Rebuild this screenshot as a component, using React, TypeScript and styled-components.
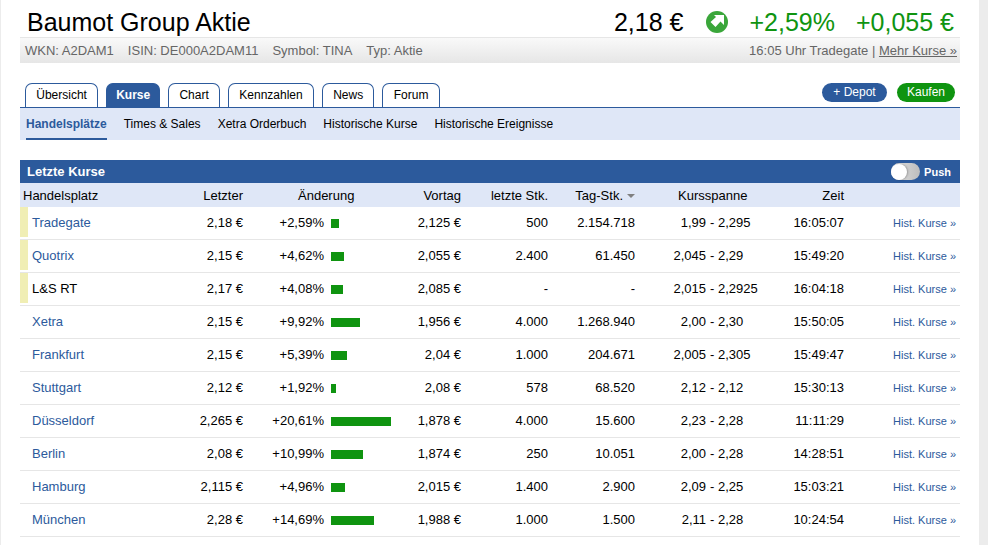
import styled, { createGlobalStyle } from 'styled-components';

const GlobalStyle = createGlobalStyle`
    html, body {
        margin: 0;
        padding: 0;
        background: #fff;
    }
    body {
        font-family: "Liberation Sans", Arial, sans-serif;
        color: #000;
        overflow: hidden;
    }
`;

const Page = styled.div`
    width: 988px;
    height: 545px;
    overflow: hidden;
    display: grid;
    grid-template-columns: 1px 19px 940px 19px 9px;
`;

const Edge = styled.div`
    background: #ececec;
`;

const Content = styled.div`
    grid-column: 3;
    display: flex;
    flex-direction: column;
`;

const TitleRow = styled.div`
    height: 38px;
    box-sizing: border-box;
    display: flex;
    align-items: center;
    padding: 8px 6px 0 7px;
    border-bottom: 1px solid #e6e6e6;
`;

const Title = styled.h1`
    margin: 0;
    flex: 1;
    font-size: 25px;
    font-weight: 400;
`;

const Price = styled.span`
    font-size: 25px;
`;

const ChangeText = styled.span`
    font-size: 25px;
    color: #0f9410;
    margin-left: 21px;
`;

const TrendIcon = styled.svg`
    width: 22px;
    height: 22px;
    margin: -2px 0 0 23px;
`;

const InfoBar = styled.div`
    height: 25px;
    display: flex;
    align-items: center;
    justify-content: space-between;
    padding: 0 3px 0 5px;
    font-size: 13px;
    color: #666;
    background: linear-gradient(#f9f9f9, #e6e6e6);
`;

const InfoList = styled.div`
    display: flex;
    gap: 14px;
`;

const MoreLink = styled.a`
    color: #666;
    text-decoration: underline;
`;

const TabRow = styled.div`
    margin-top: 20px;
    height: 24px;
    display: flex;
    align-items: flex-start;
    padding: 0 5px;
    gap: 8px;
    border-bottom: 1px solid #2c5a9c;
`;

const Tab = styled.div<{ $active?: boolean }>`
    height: 24px;
    box-sizing: border-box;
    padding: 0 ${({ $active }) => ($active ? 9 : 10.25)}px 2px;
    display: flex;
    align-items: center;
    font-size: 12px;
    font-weight: ${({ $active }) => ($active ? 700 : 400)};
    color: ${({ $active }) => ($active ? '#fff' : '#000')};
    background: ${({ $active }) => ($active ? '#2c5a9c' : '#fff')};
    border: 1px solid #2c5a9c;
    border-bottom: none;
    border-radius: 7px 7px 0 0;
`;

const Actions = styled.div`
    margin-left: auto;
    display: flex;
    gap: 10px;
    padding-bottom: 5px;
`;

const Pill = styled.div<{ $color: string; $width: number }>`
    width: ${({ $width }) => $width}px;
    height: 19px;
    padding-bottom: 1px;
    box-sizing: border-box;
    border-radius: 10px;
    background: ${({ $color }) => $color};
    color: #fff;
    font-size: 12px;
    display: flex;
    align-items: center;
    justify-content: center;
`;

const SubNav = styled.div`
    height: 32px;
    display: flex;
    gap: 17px;
    padding-left: 6px;
    background: #dfe7f7;
    font-size: 12px;
`;

const SubItem = styled.div<{ $active?: boolean }>`
    display: flex;
    align-items: center;
    color: ${({ $active }) => ($active ? '#2c5a9c' : '#000')};
    font-weight: ${({ $active }) => ($active ? 700 : 400)};
    border-bottom: 2px solid ${({ $active }) => ($active ? '#2c5a9c' : 'transparent')};
    padding-top: 2px;
    box-sizing: border-box;
`;

const TableHead = styled.div`
    margin-top: 20px;
    height: 23px;
    display: flex;
    align-items: center;
    justify-content: space-between;
    padding: 0 9px 0 7px;
    background: #2c5a9c;
    color: #fff;
    font-size: 13px;
    font-weight: 700;
`;

const PushBox = styled.div`
    display: flex;
    align-items: center;
    gap: 4px;
    font-size: 11px;
`;

const Toggle = styled.div`
    width: 29px;
    height: 17px;
    border-radius: 9px;
    background: linear-gradient(90deg, #e4e4e4, #bdbdbd);
    display: flex;
    align-items: center;
`;

const Knob = styled.div`
    width: 16px;
    height: 16px;
    border-radius: 50%;
    background: #fff;
    box-shadow: 1px 0 2px rgba(0, 0, 0, 0.25);
`;

const columns = '8px 170px 45px 157px 61px 87px 87px 125px 84px 112px 4px';

const HeaderRow = styled.div`
    height: 24px;
    display: grid;
    grid-template-columns: ${columns};
    align-items: center;
    background: #dfe7f7;
    font-size: 13px;
`;

const Row = styled.div`
    height: 33px;
    box-sizing: border-box;
    padding-bottom: 2px;
    display: grid;
    grid-template-columns: ${columns};
    align-items: center;
    border-bottom: 1px solid #e6e6e6;
    font-size: 13px;
`;

const Marker = styled.div<{ $on: boolean }>`
    height: 30px;
    background: ${({ $on }) => ($on ? '#f0eeb4' : 'transparent')};
`;

const VenueCell = styled.div<{ $linked: boolean }>`
    padding-left: 4px;
    color: ${({ $linked }) => ($linked ? '#2c5a9c' : '#000')};
`;

const HeadFirst = styled.div`
    grid-column: 1 / span 2;
    padding-left: 3px;
`;

const Num = styled.div`
    text-align: right;
    white-space: nowrap;
`;

const ChangeHead = styled.div`
    padding-left: 55px;
`;

const ChangeCell = styled.div`
    display: grid;
    grid-template-columns: 81px 1fr;
    gap: 7px;
    align-items: center;
    text-align: right;
`;

const Bar = styled.div`
    height: 9px;
    margin-top: 3px;
    background: #0f9410;
`;

const SortArrow = styled.span`
    display: inline-block;
    margin-left: 4px;
    vertical-align: middle;
    border-left: 4px solid transparent;
    border-right: 4px solid transparent;
    border-top: 4px solid #808080;
`;

const RangeHead = styled.div`
    padding-left: 43px;
`;

const RangeCell = styled.div`
    display: grid;
    grid-template-columns: 71px auto;
    column-gap: 4px;
    white-space: nowrap;
`;

const RangeLow = styled.span`
    text-align: right;
`;

const HistLink = styled.div`
    text-align: right;
    font-size: 11px;
    white-space: nowrap;
    margin-top: 2px;
    color: #2c5a9c;
`;

type Quote = {
    readonly venue: string;
    readonly marked?: boolean;
    readonly plain?: boolean;
    readonly last: string;
    readonly change: string;
    readonly bar: number;
    readonly prev: string;
    readonly lastQty: string;
    readonly dayQty: string;
    readonly low: string;
    readonly high: string;
    readonly time: string;
};

const quotes: Quote[] = [
    { venue: 'Tradegate', marked: true, last: '2,18 €', change: '+2,59%', bar: 8, prev: '2,125 €', lastQty: '500', dayQty: '2.154.718', low: '1,99', high: '2,295', time: '16:05:07' },
    { venue: 'Quotrix', marked: true, last: '2,15 €', change: '+4,62%', bar: 13, prev: '2,055 €', lastQty: '2.400', dayQty: '61.450', low: '2,045', high: '2,29', time: '15:49:20' },
    { venue: 'L&S RT', marked: true, plain: true, last: '2,17 €', change: '+4,08%', bar: 12, prev: '2,085 €', lastQty: '-', dayQty: '-', low: '2,015', high: '2,2925', time: '16:04:18' },
    { venue: 'Xetra', last: '2,15 €', change: '+9,92%', bar: 29, prev: '1,956 €', lastQty: '4.000', dayQty: '1.268.940', low: '2,00', high: '2,30', time: '15:50:05' },
    { venue: 'Frankfurt', last: '2,15 €', change: '+5,39%', bar: 16, prev: '2,04 €', lastQty: '1.000', dayQty: '204.671', low: '2,005', high: '2,305', time: '15:49:47' },
    { venue: 'Stuttgart', last: '2,12 €', change: '+1,92%', bar: 5, prev: '2,08 €', lastQty: '578', dayQty: '68.520', low: '2,12', high: '2,12', time: '15:30:13' },
    { venue: 'Düsseldorf', last: '2,265 €', change: '+20,61%', bar: 60, prev: '1,878 €', lastQty: '4.000', dayQty: '15.600', low: '2,23', high: '2,28', time: '11:11:29' },
    { venue: 'Berlin', last: '2,08 €', change: '+10,99%', bar: 32, prev: '1,874 €', lastQty: '250', dayQty: '10.051', low: '2,00', high: '2,28', time: '14:28:51' },
    { venue: 'Hamburg', last: '2,115 €', change: '+4,96%', bar: 14, prev: '2,015 €', lastQty: '1.400', dayQty: '2.900', low: '2,09', high: '2,25', time: '15:03:21' },
    { venue: 'München', last: '2,28 €', change: '+14,69%', bar: 43, prev: '1,988 €', lastQty: '1.000', dayQty: '1.500', low: '2,11', high: '2,28', time: '10:24:54' },
];

const tabs = ['Übersicht', 'Kurse', 'Chart', 'Kennzahlen', 'News', 'Forum'];
const subItems = ['Handelsplätze', 'Times & Sales', 'Xetra Orderbuch', 'Historische Kurse', 'Historische Ereignisse'];

export default function App() {
    return (
        <Page>
            <GlobalStyle />
            <Edge />
            <div />
            <Content>
                <TitleRow>
                    <Title>Baumot Group Aktie</Title>
                    <Price>2,18 €</Price>
                    <TrendIcon viewBox='0 0 22 22'>
                        <circle cx='11' cy='11' r='11' fill='#3aa63a' />
                        <path d='M8 4h10v10l-3.5-3.5-5 5.5-5-5 5.5-5z' fill='#fff' />
                    </TrendIcon>
                    <ChangeText>+2,59%</ChangeText>
                    <ChangeText>+0,055 €</ChangeText>
                </TitleRow>
                <InfoBar>
                    <InfoList>
                        <span>WKN: A2DAM1</span>
                        <span>ISIN: DE000A2DAM11</span>
                        <span>Symbol: TINA</span>
                        <span>Typ: Aktie</span>
                    </InfoList>
                    <span>16:05 Uhr Tradegate | <MoreLink>Mehr Kurse »</MoreLink></span>
                </InfoBar>
                <TabRow>
                    {tabs.map(t => <Tab key={t} $active={t === 'Kurse'}>{t}</Tab>)}
                    <Actions>
                        <Pill $color='#2c5a9c' $width={65}>+ Depot</Pill>
                        <Pill $color='#0f9410' $width={58}>Kaufen</Pill>
                    </Actions>
                </TabRow>
                <SubNav>
                    {subItems.map((s, i) => <SubItem key={s} $active={i === 0}>{s}</SubItem>)}
                </SubNav>
                <TableHead>
                    <span>Letzte Kurse</span>
                    <PushBox>
                        <Toggle><Knob /></Toggle>
                        <span>Push</span>
                    </PushBox>
                </TableHead>
                <HeaderRow>
                    <HeadFirst>Handelsplatz</HeadFirst>
                    <Num>Letzter</Num>
                    <ChangeHead>Änderung</ChangeHead>
                    <Num>Vortag</Num>
                    <Num>letzte Stk.</Num>
                    <Num>Tag-Stk.<SortArrow /></Num>
                    <RangeHead>Kursspanne</RangeHead>
                    <Num>Zeit</Num>
                </HeaderRow>
                {quotes.map(q => (
                    <Row key={q.venue}>
                        <Marker $on={!!q.marked} />
                        <VenueCell $linked={!q.plain}>{q.venue}</VenueCell>
                        <Num>{q.last}</Num>
                        <ChangeCell>
                            <span>{q.change}</span>
                            <Bar style={{ width: q.bar }} />
                        </ChangeCell>
                        <Num>{q.prev}</Num>
                        <Num>{q.lastQty}</Num>
                        <Num>{q.dayQty}</Num>
                        <RangeCell>
                            <RangeLow>{q.low}</RangeLow>
                            <span>- {q.high}</span>
                        </RangeCell>
                        <Num>{q.time}</Num>
                        <HistLink>Hist. Kurse »</HistLink>
                    </Row>
                ))}
            </Content>
            <div />
            <Edge />
        </Page>
    );
}
